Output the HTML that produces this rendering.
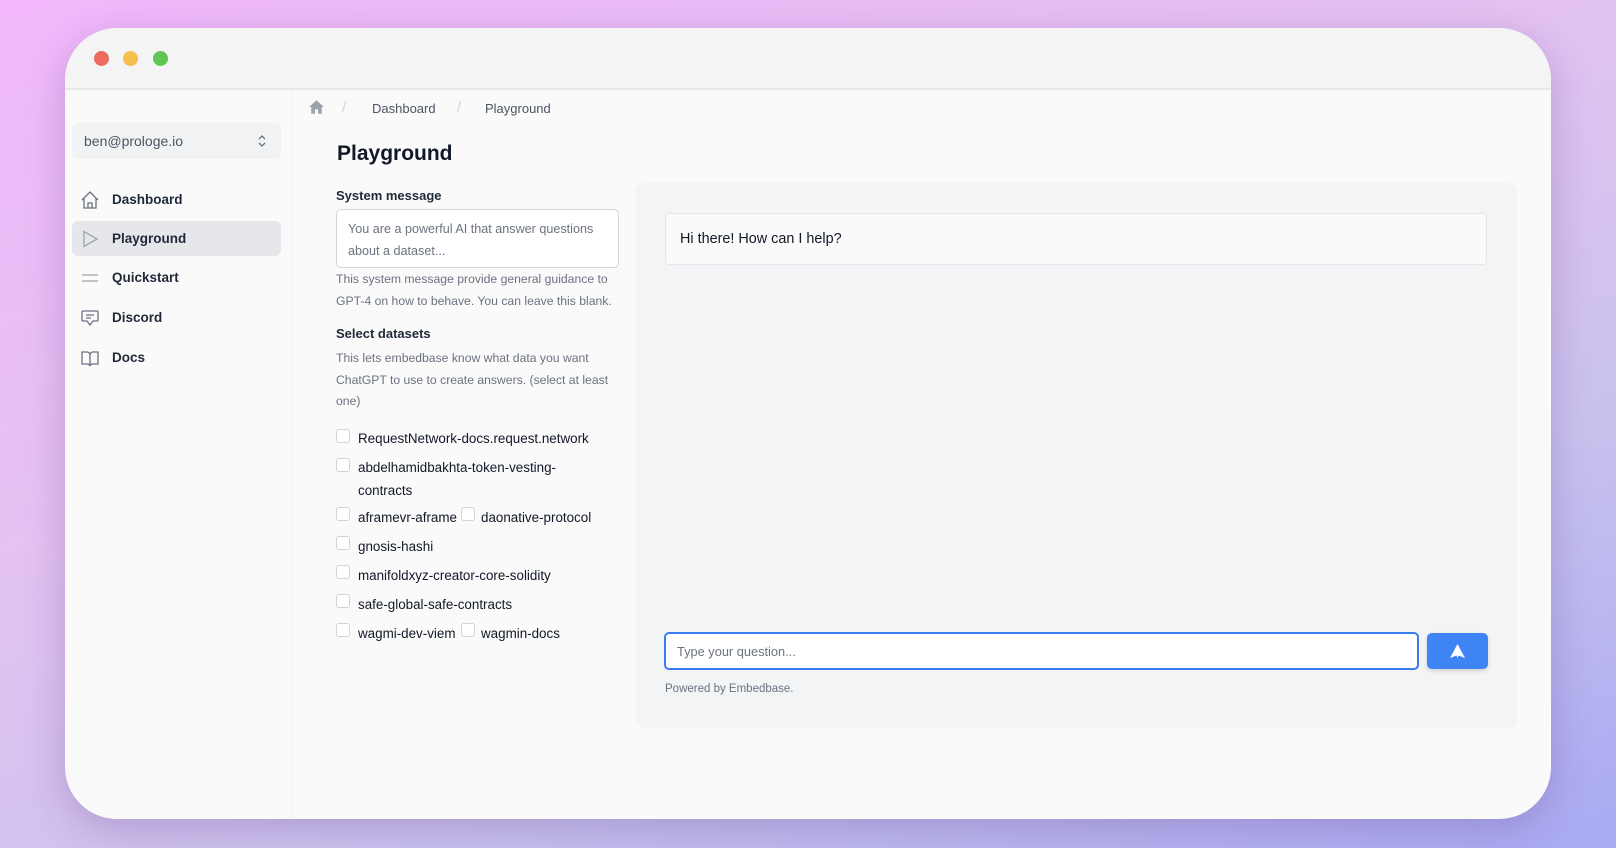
<!DOCTYPE html>
<html><head><meta charset="utf-8"><style>
*{box-sizing:border-box;margin:0;padding:0}
html,body{width:1616px;height:848px;overflow:hidden}
body{font-family:"Liberation Sans",sans-serif;background:linear-gradient(160deg,#f2b8fb 0%,#e3c2f2 40%,#c9c2ee 70%,#a9aaf3 100%);position:relative}
.win{position:absolute;left:65px;top:28px;width:1486px;height:791px;border-radius:52px;background:#fafafa;overflow:hidden;box-shadow:0 10px 40px rgba(80,40,120,.25)}
.tb{position:absolute;left:0;top:0;width:100%;height:62px;background:#f4f4f4;border-bottom:2px solid #e8e8e8}
.dot{position:absolute;top:23px;width:15px;height:15px;border-radius:50%}
.side{position:absolute;left:0;top:62px;width:228px;bottom:0;border-right:1px solid #f0f0f0}
.abs{position:absolute;white-space:nowrap}
.acct{position:absolute;left:7px;top:33px;width:209px;height:36px;background:#f1f2f4;border-radius:6px;font-size:14px;color:#4b5563;padding:10px 12px}
.nav{position:absolute;left:7px;width:209px;height:35px;border-radius:6px;font-size:13.5px;font-weight:bold;color:#1f2937}
.nav span{position:absolute;left:40px;top:10px}
.nav svg{position:absolute;left:8px;top:8px}
.muted{color:#6b7280}
.lbl{font-size:13px;font-weight:bold;color:#1f2937}
.help{font-size:12.2px;color:#6b7280;line-height:21.5px}
.cb{position:absolute;left:271px;width:14px;height:14px;border:1px solid #d1d5db;border-radius:3px;background:#fff}
.ds{font-size:13.4px;color:#111827}
</style></head><body>
<div class="win">
 <div class="tb">
  <div class="dot" style="left:29px;background:#ec6a5e"></div>
  <div class="dot" style="left:58px;background:#f4bf4f"></div>
  <div class="dot" style="left:88px;background:#61c554"></div>
 </div>
 <div class="side">
  <div class="acct">ben@prologe.io
   <svg style="position:absolute;right:14px;top:10px" width="10" height="16" viewBox="0 0 10 16" fill="none" stroke="#6b7280" stroke-width="1.3"><path d="M2 6l3-3 3 3M2 10l3 3 3-3"/></svg></div>
  <div class="nav" style="top:92px"><svg width="20" height="20" viewBox="0 0 20 20" fill="none" stroke="#6b7280" stroke-width="1.3"><path d="M2 10L10 2l8 8M4 8v10h12V8M8 18v-5h4v5"/></svg><span>Dashboard</span></div>
  <div class="nav" style="top:131px;background:#e5e7eb"><svg width="20" height="20" viewBox="0 0 20 20" fill="none" stroke="#9ca3af" stroke-width="1.3"><path d="M4 2.5v15l13-7.5z"/></svg><span>Playground</span></div>
  <div class="nav" style="top:170px"><svg width="20" height="20" viewBox="0 0 20 20" fill="none" stroke="#9ca3af" stroke-width="1.3"><path d="M2 7h16M2 13h16"/></svg><span>Quickstart</span></div>
  <div class="nav" style="top:210px"><svg width="20" height="20" viewBox="0 0 20 20" fill="none" stroke="#6b7280" stroke-width="1.3"><path d="M3 3h14a1 1 0 011 1v8a1 1 0 01-1 1h-4l-3 4-3-4H3a1 1 0 01-1-1V4a1 1 0 011-1zM6 7h8M6 10h5"/></svg><span>Discord</span></div>
  <div class="nav" style="top:250px"><svg width="20" height="20" viewBox="0 0 20 20" fill="none" stroke="#6b7280" stroke-width="1.3"><path d="M2 4h5a3 3 0 013 3v11a3 3 0 00-3-2H2zM18 4h-5a3 3 0 00-3 3v11a3 3 0 013-2h5z"/></svg><span>Docs</span></div>
 </div>
 <svg class="abs" style="left:244px;top:72px" width="15" height="14" viewBox="0 0 20 18" fill="#9ca3af"><path d="M10 0L0 9h3v9h5v-6h4v6h5V9h3z"/></svg>
 <div class="abs muted" style="left:277px;top:71px;font-size:15px;color:#d1d5db">/</div>
 <div class="abs" style="left:307px;top:73px;font-size:13px;color:#4b5563">Dashboard</div>
 <div class="abs" style="left:392px;top:71px;font-size:15px;color:#d1d5db">/</div>
 <div class="abs" style="left:420px;top:73px;font-size:13px;color:#4b5563">Playground</div>
 <div class="abs" style="left:272px;top:114px;font-size:21px;font-weight:bold;color:#111827">Playground</div>
 <div class="abs lbl" style="left:271px;top:160px">System message</div>
 <div class="abs" style="left:271px;top:181px;width:283px;height:59px;background:#fff;border:1px solid #d1d5db;border-radius:5px;padding:9px 11px;font-size:12.6px;color:#6b7280;line-height:21.5px;white-space:normal">You are a powerful AI that answer questions about a dataset...</div>
 <div class="abs help" style="left:271px;top:241px">This system message provide general guidance to<br>GPT-4 on how to behave. You can leave this blank.</div>
 <div class="abs lbl" style="left:271px;top:298px">Select datasets</div>
 <div class="abs help" style="left:271px;top:320px">This lets embedbase know what data you want<br>ChatGPT to use to create answers. (select at least<br>one)</div>
 <div class="cb" style="top:401px"></div><div class="abs ds" style="left:293px;top:403px">RequestNetwork-docs.request.network</div>
 <div class="cb" style="top:430px"></div><div class="abs ds" style="left:293px;top:429px;line-height:22.5px">abdelhamidbakhta-token-vesting-<br>contracts</div>
 <div class="cb" style="top:479px"></div><div class="abs ds" style="left:293px;top:482px">aframevr-aframe</div>
 <div class="cb" style="top:479px;left:396px"></div><div class="abs ds" style="left:416px;top:482px">daonative-protocol</div>
 <div class="cb" style="top:508px"></div><div class="abs ds" style="left:293px;top:511px">gnosis-hashi</div>
 <div class="cb" style="top:537px"></div><div class="abs ds" style="left:293px;top:540px">manifoldxyz-creator-core-solidity</div>
 <div class="cb" style="top:566px"></div><div class="abs ds" style="left:293px;top:569px">safe-global-safe-contracts</div>
 <div class="cb" style="top:595px"></div><div class="abs ds" style="left:293px;top:598px">wagmi-dev-viem</div>
 <div class="cb" style="top:595px;left:396px"></div><div class="abs ds" style="left:416px;top:598px">wagmin-docs</div>
 <div class="abs" style="left:571px;top:155px;width:881px;height:545px;background:#f3f4f6;border-radius:8px"></div>
 <div class="abs" style="left:600px;top:185px;width:822px;height:52px;background:#fafafa;border:1px solid #e5e7eb;border-radius:4px;font-size:14.4px;color:#111827;padding:17px 14px">Hi there! How can I help?</div>
 <div class="abs" style="left:599px;top:604px;width:755px;height:38px;background:#fff;border:2px solid #3b7bf0;border-radius:5px;font-size:12.8px;color:#6b7280;padding:10px 11px">Type your question...</div>
 <div class="abs" style="left:1362px;top:605px;width:61px;height:36px;background:#3f84f5;border-radius:5px;box-shadow:0 2px 4px rgba(0,0,0,.15)">
  <svg style="position:absolute;left:23px;top:11px" width="15" height="14" viewBox="0 0 15 14" fill="#fff"><path d="M7.5 0L15 14 8.5 11.5 7.5 14 6.5 11.5 0 14z"/></svg></div>
 <div class="abs" style="left:600px;top:655px;font-size:11.5px;color:#6b7280">Powered by Embedbase.</div>
</div>
</body></html>
